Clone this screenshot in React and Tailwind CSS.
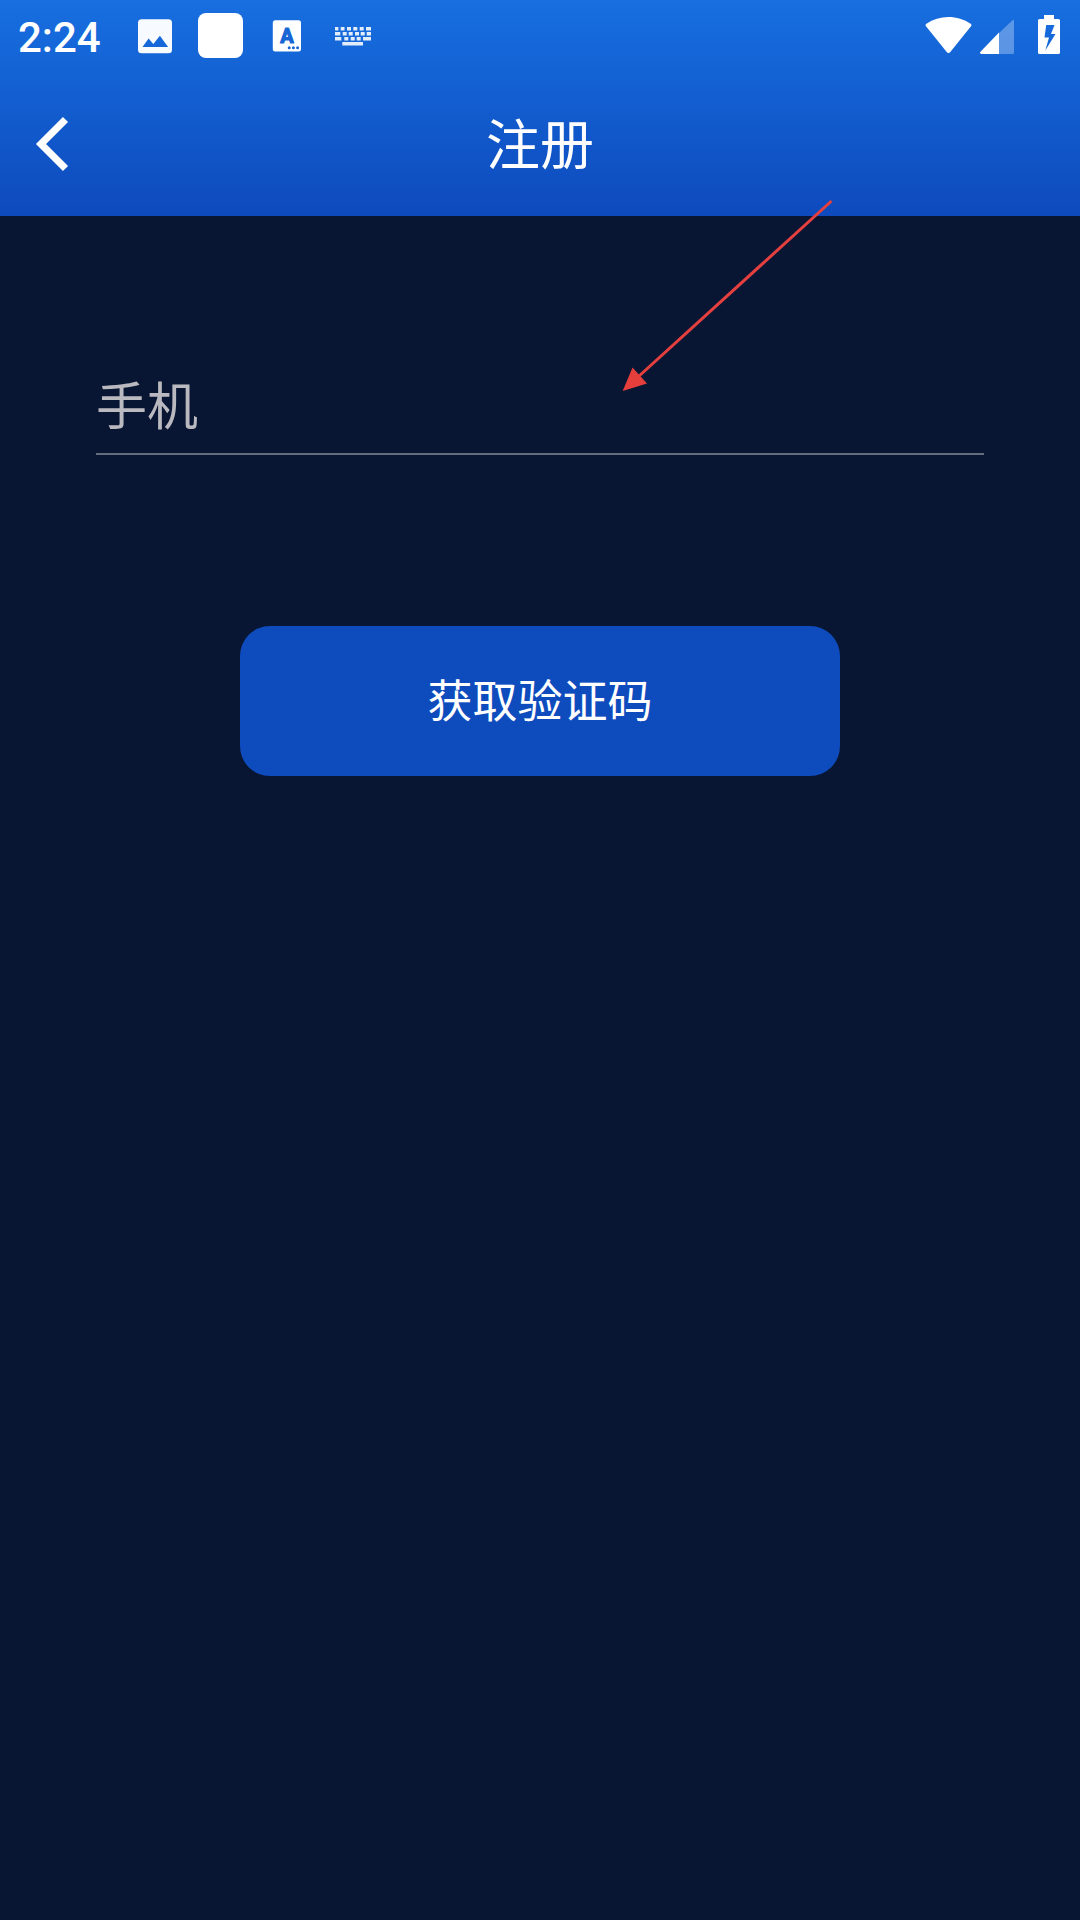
import React from 'react';

const keyRows = [
    { y: 27, keys: [[15, 3.4], [20.7, 3.8], [27, 4], [33.3, 4], [39.7, 4], [46, 5]] },
    { y: 32, keys: [[15, 5.3], [22.7, 4], [28.7, 4], [35, 4], [40.7, 4], [46.7, 4.3]] },
    { y: 37, keys: [[15, 6.3], [24.3, 4], [30.7, 4], [36.7, 4], [43, 8]] },
    { y: 42, keys: [[22.3, 20.7]] },
];

function NotificationIcons() {
    return (
        <div className="flex">
            {/* Picture */}
            <svg className="w-[66px] h-[72px]" viewBox="0 0 66 72">
                <path fill="#fff" fillOpacity="0.97" fillRule="evenodd" d="M19.5 19.2h27a3.5 3.5 0 0 1 3.5 3.5v27a3.5 3.5 0 0 1-3.5 3.5h-27a3.5 3.5 0 0 1-3.5-3.5v-27a3.5 3.5 0 0 1 3.5-3.5zM20.5 47h25.6l-8.2-11.2-6.6 8.3-4.7-5.6z" />
            </svg>
            <svg className="w-[66px] h-[72px]" viewBox="0 0 66 72">
                <rect x="10" y="13" width="45" height="45" rx="8" fill="#fff" />
            </svg>
            {/* Input language */}
            <svg className="w-[66px] h-[72px]" viewBox="0 0 66 72">
                <rect x="18.8" y="20.2" width="28.2" height="31.3" rx="2.5" fill="#fff" />
                <text x="33" y="42.7" textAnchor="middle" fill="#1765d5" stroke="#1765d5" strokeWidth="1.2" strokeLinejoin="round" className="text-[20px] font-bold font-['Roboto',sans-serif]">A</text>
                <circle cx="35.2" cy="47.7" r="1.5" fill="#1765d5" />
                <circle cx="39.4" cy="47.7" r="1.5" fill="#1765d5" />
                <circle cx="43.6" cy="47.7" r="1.5" fill="#1765d5" />
            </svg>
            {/* Keyboard */}
            <svg className="w-[66px] h-[72px]" viewBox="0 0 66 72">
                {keyRows.map((row) =>
                    row.keys.map(([x, w]) => (
                        <rect key={`${row.y}-${x}`} x={x} y={row.y} width={w} height="3.5" fill="#fff" fillOpacity="0.88" />
                    ))
                )}
            </svg>
        </div>
    );
}

function SystemIcons() {
    return (
        <div className="flex">
            {/* Wifi */}
            <svg className="w-[58px] h-[72px]" viewBox="0 0 58 72">
                <path fill="#fff" d="M4.4 23.8C11 19.2 18.5 17 26.500 17s15.500 2.200 22.100 6.800c1 .8 1.100 1.600.4 2.500L28.100 52.300c-1 1.100-2.200 1.100-3.200 0L4 26.300c-.7-.9-.6-1.700.4-2.500z" />
            </svg>
            {/* Signal */}
            <svg className="w-[54px] h-[72px]" viewBox="0 0 54 72">
                <path fill="#fff" fillOpacity="0.3" d="M19 54h13.500q1.500 0 1.500-1.500v-31.500q0-2-1.700-.6L19 33z" />
                <path fill="#fff" d="M19 32.500V54H1.200q-2-.5-.7-2.200z" />
            </svg>
            {/* Battery */}
            <svg className="w-[46px] h-[72px]" viewBox="2 0 46 72">
                <path fill="#fff" fillRule="evenodd" d="M12 15h10v4h4.500q1.500 0 1.500 1.500v32q0 1.500-1.500 1.500h-19q-1.500 0-1.500-1.500v-32q0-1.500 1.500-1.500H12zM14.200 25L12.500 37.500h4.500L13.300 50.500l10.200-16.500h-4.500L22.500 25z" />
            </svg>
        </div>
    );
}

function StatusBar() {
    return (
        <div className="h-[72px] flex justify-between pl-[18px]">
            <div className="flex">
                <span className="w-[104px] pt-[2px] leading-[72px] text-[42px] font-medium font-['Roboto',sans-serif]">2:24</span>
                <NotificationIcons />
            </div>
            <SystemIcons />
        </div>
    );
}

function TitleBar() {
    return (
        <div className="h-36 grid grid-cols-[108px_1fr_108px] items-center">
            <button className="h-36" aria-label="Back">
                <svg className="w-[108px] h-36" viewBox="0 0 108 144" fill="none" stroke="#fff" strokeWidth="7.2">
                    <path d="M65.500 47.500L41 72L65.500 96.500" />
                </svg>
            </button>
            <h1 className="pb-1 text-center text-[54px] leading-[80px] font-normal">注册</h1>
        </div>
    );
}

export default function App() {
    return (
        <div className="relative w-[1080px] h-[1920px] overflow-hidden bg-[#081633] text-white font-['Noto_Sans_CJK_SC',sans-serif]">
            <header className="h-[216px] bg-linear-to-b from-[#186fe0] to-[#0e4abd]">
                <StatusBar />
                <TitleBar />
            </header>

            <main className="flex flex-col items-center pt-[148px]">
                <input
                    type="tel"
                    placeholder="手机"
                    className="w-[888px] h-[91px] pb-[11px] border-b-2 border-[#636c7c] bg-transparent text-[51px] outline-none placeholder:text-[#b9b9bf]"
                />
                <button className="mt-[171px] w-[600px] h-[150px] pb-1 rounded-[30px] bg-[#0e4cbe] text-[45px]">
                    获取验证码
                </button>
            </main>

            {/* Pointer to the phone field */}
            <svg className="absolute left-[600px] top-[180px] pointer-events-none" width="260" height="230" viewBox="0 0 260 230">
                <path d="M38 197L231.500 21" stroke="#e5403f" strokeWidth="3" />
                <path d="M22.700 211L32.500 187.500L47 203.500z" fill="#e53f3c" />
            </svg>
        </div>
    );
}
